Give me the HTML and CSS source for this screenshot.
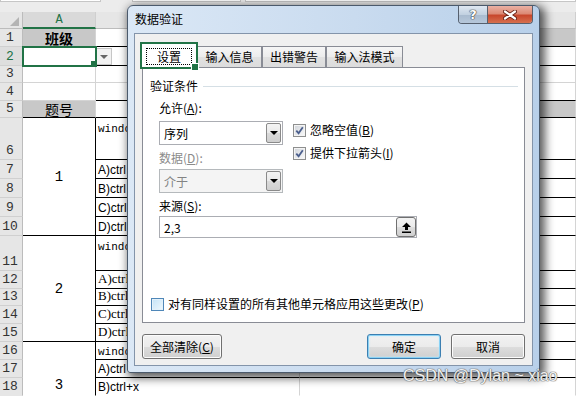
FILE: index.html
```html
<!DOCTYPE html>
<html lang="zh-CN">
<head>
    <meta charset="UTF-8">
    <meta name="viewport" content="width=device-width, initial-scale=1.0">
    <title>数据验证</title>
    <link rel="stylesheet" href="styles.css">
</head>
<body>
<div class="screen">
    <div class="formula-strip">
        <span class="fbox name-box"></span>
        <span class="fbox fx-box"></span>
        <span class="fbox edit-box"></span>
    </div>

    <!-- hoja de cálculo -->
    <div class="sheet">
        <div class="corner"><span class="corner-tri"></span></div>
        <div class="colhead active">A</div>
        <div class="colhead"></div>
        <div class="colhead"></div>

        <div class="rn">1</div>
        <div class="ca shade caption bold bk">班级</div>
        <div class="cb bk"></div>
        <div class="cc shade bk"></div>

        <div class="rn active">2</div>
        <div class="ca sel"></div>
        <div class="cb bk dd-cell"><span class="dd"><span class="dd-arrow"></span></span></div>
        <div class="cc bk"></div>

        <div class="rn">3</div>
        <div class="ca"></div>
        <div class="cb"></div>
        <div class="cc"></div>

        <div class="rn">4</div>
        <div class="ca"></div>
        <div class="cb bk"></div>
        <div class="cc bk"></div>

        <div class="rn">5</div>
        <div class="ca shade caption bk">题号</div>
        <div class="cb bk"></div>
        <div class="cc shade bk"></div>

        <div class="rn">6</div>
        <div class="ca merge">1</div>
        <div class="cb bk mono top">windows</div>
        <div class="cc bk"></div>

        <div class="rn">7</div>
        <div class="cb bk sans">A)ctrl</div>
        <div class="cc bk"></div>
        <div class="rn">8</div>
        <div class="cb bk sans">B)ctrl</div>
        <div class="cc bk"></div>
        <div class="rn">9</div>
        <div class="cb bk sans">C)ctrl</div>
        <div class="cc bk"></div>
        <div class="rn">10</div>
        <div class="cb bk sans">D)ctrl</div>
        <div class="cc bk"></div>

        <div class="rn">11</div>
        <div class="ca merge">2</div>
        <div class="cb bk mono top">windows</div>
        <div class="cc bk"></div>

        <div class="rn">12</div>
        <div class="cb bk serif">A)ctrl</div>
        <div class="cc bk"></div>
        <div class="rn">13</div>
        <div class="cb bk serif">B)ctrl</div>
        <div class="cc bk"></div>
        <div class="rn">14</div>
        <div class="cb bk serif">C)ctrl</div>
        <div class="cc bk"></div>
        <div class="rn">15</div>
        <div class="cb bk serif">D)ctrl</div>
        <div class="cc bk"></div>

        <div class="rn">16</div>
        <div class="ca merge short">3</div>
        <div class="cb bk mono">windows</div>
        <div class="cc bk"></div>
        <div class="rn">17</div>
        <div class="cb bk sans">A)ctrl</div>
        <div class="cc bk"></div>
        <div class="rn open">18</div>
        <div class="cb open sans">B)ctrl+x</div>
        <div class="cc open"></div>
    </div>

    <!-- ventana de diálogo -->
    <div class="dialog">
        <div class="titlebar">
            <span class="title">数据验证</span>
            <div class="caption-btns">
                <span class="cap-help">?</span>
                <span class="cap-close">
                    <svg width="14" height="10" viewBox="0 0 14 10">
                        <path d="M2 1.5 L12 8.5 M12 1.5 L2 8.5" stroke="#6a2418" stroke-width="4" stroke-linecap="round"/>
                        <path d="M2 1.5 L12 8.5 M12 1.5 L2 8.5" stroke="#fff" stroke-width="2.2" stroke-linecap="round"/>
                    </svg>
                </span>
            </div>
        </div>

        <div class="client">
            <div class="tabs">
                <span class="tab sel"><span class="focus">设置</span></span>
                <span class="tab w65">输入信息</span>
                <span class="tab w64">出错警告</span>
                <span class="tab w77">输入法模式</span>
            </div>

            <div class="panel">
                <div class="group-title">验证条件</div>

                <div class="criteria">
                    <div class="crit-left">
                        <div class="lbl">允许(<u>A</u>):</div>
                        <div class="combo combo-first">
                            <span>序列</span>
                            <span class="combo-btn"><span class="combo-arrow"></span></span>
                        </div>
                        <div class="lbl dim gap">数据(<u>D</u>):</div>
                        <div class="combo disabled">
                            <span>介于</span>
                            <span class="combo-btn"><span class="combo-arrow"></span></span>
                        </div>
                    </div>
                    <div class="crit-right">
                        <div class="check">
                            <span class="box"><svg width="9" height="9" viewBox="0 0 9 9"><path d="M1.3 4.6 L3.6 7.2 L7.8 1.3" fill="none" stroke="#4b5f8d" stroke-width="1.8"/></svg></span>
                            <span>忽略空值(<u>B</u>)</span>
                        </div>
                        <div class="check">
                            <span class="box"><svg width="9" height="9" viewBox="0 0 9 9"><path d="M1.3 4.6 L3.6 7.2 L7.8 1.3" fill="none" stroke="#4b5f8d" stroke-width="1.8"/></svg></span>
                            <span>提供下拉箭头(<u>I</u>)</span>
                        </div>
                    </div>
                </div>

                <div class="source-block">
                    <div class="lbl">来源(<u>S</u>):</div>
                    <div class="source">
                        <span>2,3</span>
                        <span class="ref-btn">
                            <svg width="11" height="11" viewBox="0 0 11 11">
                                <path d="M5.5 0.5 L10 5 H7 V8 H4 V5 H1 Z" fill="#000"/>
                                <rect x="1" y="9.5" width="9" height="1.5" fill="#000"/>
                            </svg>
                        </span>
                    </div>
                </div>

                <div class="check apply">
                    <span class="box hot"></span>
                    <span>对有同样设置的所有其他单元格应用这些更改(<u>P</u>)</span>
                </div>
            </div>

            <div class="actions">
                <span class="btn wide">全部清除(<u>C</u>)</span>
                <div class="btn-pair">
                    <span class="btn default">确定</span>
                    <span class="btn">取消</span>
                </div>
            </div>
        </div>
    </div>

    <div class="watermark">CSDN @Dylan ~ xiao</div>
</div>
</body>
</html>
```

FILE: styles.css
```css
* { box-sizing: border-box; }

body {
    margin: 0;
    font-family: "Noto Sans CJK SC", sans-serif;
    font-size: 12px;
    color: #000;
    background: #fff;
}

.screen {
    position: relative;
    width: 576px;
    height: 396px;
    overflow: hidden;
}

/* barra de fórmulas (solo el borde inferior es visible) */
.formula-strip { display: flex; height: 12px; background: #ececec; }
.fbox { height: 2px; background: #fff; border: 1px solid #c6c6c6; border-top: 0; }
.name-box { width: 101px; }
.fx-box { width: 109px; margin-left: 31px; }
.edit-box { flex: 1; margin-left: 4px; }

/* rejilla */
.sheet {
    display: grid;
    grid-template-columns: 23px 73px 204px 1fr;
    grid-template-rows: 17px 18px 19px 17px 18px 17px 42px 19px 19px 19px 19px 35px 18px 17px 18px 18px 18px 18px 18px;
}

.corner {
    grid-column: 1;
    background: #e6e6e6;
    border-right: 1px solid #bcbcbc;
    border-bottom: 1px solid #bcbcbc;
    display: flex;
    align-items: flex-end;
    justify-content: flex-end;
    padding: 0 3px 2px 0;
}
.corner-tri {
    width: 0; height: 0;
    border-left: 9px solid transparent;
    border-bottom: 9px solid #b4b4b4;
}

.colhead {
    background: #e6e6e6;
    border-right: 1px solid #cfcfcf;
    border-bottom: 1px solid #bcbcbc;
    font: 12px "Liberation Mono", monospace;
    color: #444;
    display: flex;
    align-items: center;
    justify-content: center;
}
.colhead.active { background: #d9d9d9; border-bottom: 2px solid #217346; color: #217346; }

.rn {
    grid-column: 1;
    background: #e6e6e6;
    border-right: 1px solid #bcbcbc;
    border-bottom: 1px solid #d0d0d0;
    font: 13px/14px "Liberation Mono", monospace;
    color: #333;
    display: flex;
    align-items: flex-end;
    justify-content: center;
    padding: 0 2px 1px 0;
}
.rn.active { color: #217346; background: #dedede; }

.ca, .cb, .cc {
    background: #fff;
    border-right: 1px solid #d4d4d4;
    border-bottom: 1px solid #d4d4d4;
    display: flex;
    align-items: flex-end;
    overflow: hidden;
    white-space: nowrap;
}
.ca { grid-column: 2; justify-content: center; }
.cb { grid-column: 3; padding: 0 0 1px 2px; }
.cc { grid-column: 4; }

.bk { border-bottom-color: #000; }
.open { border-bottom-color: transparent; }
.shade { background: #c8c8c8; }

.caption { font-size: 14px; line-height: 14px; align-items: center; overflow: visible; }
.bold { font-weight: 700; }

.merge {
    grid-row: span 5;
    border-right-color: #000;
    border-bottom-color: #000;
    align-items: center;
    font: 14px "Liberation Mono", monospace;
}
.merge.short { grid-row: span 3; align-items: flex-end; padding-bottom: 2px; border-bottom-color: transparent; }

.sel { position: relative; outline: 2px solid #217346; outline-offset: -1px; }
.sel::after {
    content: "";
    position: absolute;
    right: -3px;
    bottom: -3px;
    width: 6px;
    height: 6px;
    background: #217346;
    border: 1px solid #fff;
}

.dd-cell { align-items: flex-start; padding: 1px 0 0 0; }
.dd {
    width: 16px;
    height: 17px;
    background: #f2f2f2;
    border: 1px solid #c6c6c6;
    display: flex;
    align-items: center;
    justify-content: center;
}
.dd-arrow { border-left: 4px solid transparent; border-right: 4px solid transparent; border-top: 4px solid #666; }

.mono { font: 11px "Liberation Mono", monospace; }
.top { align-items: flex-start; padding-top: 5px; }
.sans { font: 12px "Liberation Sans", sans-serif; }
.serif { font: 13px "Liberation Serif", serif; }

/* diálogo */
.dialog {
    position: absolute;
    left: 127px;
    top: 5px;
    width: 413px;
    height: 368px;
    display: flex;
    flex-direction: column;
    padding: 0 6px 6px;
    border: 1px solid #4b5a6c;
    border-radius: 6px 6px 3px 3px;
    background: linear-gradient(90deg, #dbe8f6 0%, #c9dbef 55%, #b8d0ea 100%);
    box-shadow: 3px 3px 10px 2px rgba(0, 0, 0, .65);
}

.titlebar {
    height: 27px;
    display: flex;
    justify-content: space-between;
    align-items: flex-start;
}
.title { padding: 5px 0 0 1px; line-height: 16px; }

.caption-btns {
    display: flex;
    width: 75px;
    height: 18px;
    border: 1px solid #56606e;
    border-top: 0;
    border-radius: 0 0 4px 4px;
    overflow: hidden;
}
.cap-help {
    width: 29px;
    border-right: 1px solid #56606e;
    background: linear-gradient(#dfe8f2, #c2d1e1 50%, #a9bbcf 51%, #b6c7da);
    color: #fff;
    font: bold 13px/17px "DejaVu Sans", sans-serif;
    text-align: center;
    text-shadow: 0 0 1px #333, 0 0 1px #333, 0 0 1px #333;
}
.cap-close {
    flex: 1;
    background: linear-gradient(#eab1a4, #dc8a75 45%, #c8472c 55%, #d6704f);
    display: flex;
    align-items: center;
    justify-content: center;
}

.client {
    flex: 1;
    background: #f0f0f0;
    border: 1px solid #8394aa;
    padding: 9px 7px 0;
    display: flex;
    flex-direction: column;
}

.tabs { display: flex; align-items: flex-end; height: 24px; }
.tab {
    height: 21px;
    border: 1px solid #898c95;
    border-bottom: 0;
    background: linear-gradient(#f6f6f6, #ececec 50%, #e1e1e1 51%, #dcdcdc);
    line-height: 19px;
    text-align: center;
}
.w65 { width: 65px; }
.w64 { width: 64px; }
.w77 { width: 77px; }
.tab.sel {
    position: relative;
    z-index: 1;
    width: 56px;
    height: 25px;
    margin: 0 0 -1px -1px;
    background: #fff;
    padding: 4px 4px 3px;
}
.focus { display: block; height: 17px; border: 1px dotted #000; line-height: 15px; }

.panel {
    height: 256px;
    background: #fff;
    border: 1px solid #898c95;
    padding: 10px 0 9px;
    display: flex;
    flex-direction: column;
}

.group-title {
    display: flex;
    align-items: center;
    line-height: 16px;
    padding: 0 6px 0 7px;
}
.group-title::after { content: ""; flex: 1; height: 1px; margin-left: 5px; background: #d5dfe5; }

.criteria { display: flex; gap: 10px; margin-top: 5px; padding-left: 16px; }
.crit-left { width: 124px; }
.crit-right { padding-top: 22px; display: flex; flex-direction: column; gap: 5px; }

.lbl { line-height: 18px; }
.lbl.gap { margin-top: 4px; }
.dim { color: #8b8b8b; }

.combo {
    height: 24px;
    border: 1px solid #abadb3;
    display: flex;
    align-items: center;
    justify-content: space-between;
    padding: 0 1px 0 4px;
}
.combo-first { margin-top: 4px; }
.combo.disabled { background: #f4f4f4; border-color: #b5b9bc; color: #838383; margin-top: 2px; }
.combo-btn {
    width: 15px;
    height: 20px;
    border: 1px solid #8a8a8a;
    border-radius: 2px;
    background: linear-gradient(#f4f4f4, #e9e9e9 50%, #dadada 51%, #cfcfcf);
    display: flex;
    align-items: center;
    justify-content: center;
}
.combo-arrow { border-left: 4px solid transparent; border-right: 4px solid transparent; border-top: 4px solid #000; }

.check { display: flex; align-items: center; gap: 4px; line-height: 18px; }
.box {
    width: 13px;
    height: 13px;
    border: 1px solid #8e8f8f;
    padding: 1px;
    background: linear-gradient(135deg, #cfd3d9, #fbfbfb);
    box-shadow: inset 0 0 0 1px #f4f4f4;
}
.box svg { display: block; margin: 0; }
.box.hot {
    border-color: #4f87b8;
    background: linear-gradient(135deg, #c3e3f7, #eff8fd);
    box-shadow: inset 0 0 0 1px #e3f1fa;
}

.source-block { padding-left: 16px; margin-top: 4px; }
.source {
    width: 258px;
    height: 22px;
    margin-top: 1px;
    border: 1px solid #abadb3;
    display: flex;
    align-items: center;
    justify-content: space-between;
    padding: 0 0 0 4px;
}
.ref-btn {
    width: 20px;
    height: 20px;
    border: 1px solid #707070;
    border-radius: 3px;
    background: linear-gradient(#f3f3f3, #ebebeb 50%, #dddddd 51%, #cfcfcf);
    display: flex;
    align-items: center;
    justify-content: center;
}

.apply { margin-top: auto; padding-left: 8px; }

.actions { display: flex; justify-content: space-between; margin-top: 11px; }
.btn-pair { display: flex; gap: 10px; }
.btn {
    width: 74px;
    height: 25px;
    border: 1px solid #707070;
    border-radius: 3px;
    background: linear-gradient(#f2f2f2, #ebebeb 50%, #dddddd 51%, #cfcfcf);
    box-shadow: inset 0 0 0 1px #fcfcfc;
    line-height: 23px;
    text-align: center;
}
.btn.wide { width: 80px; }
.btn.default { border-color: #3c7fb1; box-shadow: inset 0 0 0 1px #8ad2f5, inset 0 0 2px 1px #c4ecfc; }

.watermark {
    position: absolute;
    left: 403px;
    top: 368px;
    font: 16px/16px "Liberation Sans", sans-serif;
    color: rgba(255, 255, 255, .92);
    text-shadow: 0 0 1px #666, 0 0 1px #666, 0 0 1px #666;
    white-space: nowrap;
}
```
